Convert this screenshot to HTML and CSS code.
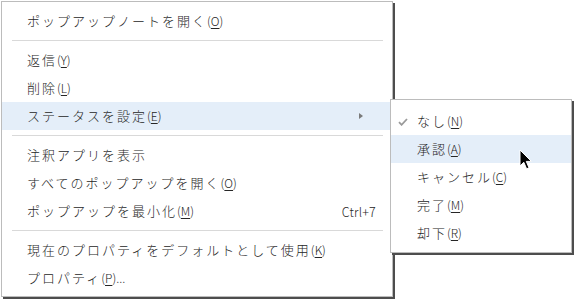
FILE: index.html
```html
<!DOCTYPE html>
<html lang="ja">
<head>
<meta charset="utf-8">
<link rel="stylesheet" href="styles.css">
</head>
<body>
<div class="screen">
  <div class="menu main">
    <div class="item"><span class="label">ポップアップノートを開く</span><span class="acc">(<u>O</u>)</span></div>
    <div class="sep"></div>
    <div class="item"><span class="label">返信</span><span class="acc">(<u>Y</u>)</span></div>
    <div class="item"><span class="label">削除</span><span class="acc">(<u>L</u>)</span></div>
    <div class="item active"><span class="label">ステータスを設定</span><span class="acc">(<u>E</u>)</span><span class="arrow"></span></div>
    <div class="sep"></div>
    <div class="item"><span class="label">注釈アプリを表示</span></div>
    <div class="item"><span class="label">すべてのポップアップを開く</span><span class="acc">(<u>O</u>)</span></div>
    <div class="item"><span class="label">ポップアップを最小化</span><span class="acc">(<u>M</u>)</span><span class="shortcut">Ctrl+7</span></div>
    <div class="sep"></div>
    <div class="item"><span class="label">現在のプロパティをデフォルトとして使用</span><span class="acc">(<u>K</u>)</span></div>
    <div class="item"><span class="label">プロパティ</span><span class="acc">(<u>P</u>)...</span></div>
  </div>

  <div class="menu sub">
    <div class="item checked"><svg class="check" width="10" height="8" viewBox="0 0 10 8"><path d="M1 4.2 L3.6 6.8 L9 1" fill="none" stroke="#9a9a9a" stroke-width="1.8"/></svg><span class="label">なし</span><span class="acc">(<u>N</u>)</span></div>
    <div class="item active"><span class="label">承認</span><span class="acc">(<u>A</u>)</span></div>
    <div class="item"><span class="label">キャンセル</span><span class="acc">(<u>C</u>)</span></div>
    <div class="item"><span class="label">完了</span><span class="acc">(<u>M</u>)</span></div>
    <div class="item"><span class="label">却下</span><span class="acc">(<u>R</u>)</span></div>
  </div>

  <svg class="cursor" width="14" height="22" viewBox="0 0 14 22"><path d="M1 1 L1 17 L4.8 13.3 L7.6 19.8 L10 18.8 L7.3 12.4 L12.4 12.4 Z" fill="#000" stroke="#fff" stroke-width="1" stroke-linejoin="miter"/></svg>
</div>
</body>
</html>
```

FILE: styles.css
```css
html, body {
  margin: 0;
  padding: 0;
  background: #ffffff;
}

.screen {
  position: relative;
  width: 575px;
  height: 300px;
  overflow: hidden;
  font-family: "Noto Sans CJK JP", "Noto Sans", sans-serif;
  font-weight: 300;
  color: #262626;
}

.menu {
  box-sizing: border-box;
  background: #ffffff;
  border: 1px solid #bcbcbc;
  box-shadow: 2px 2px 0 #4d4d4d;
}

.main {
  margin: 1px 0 0 1px;
  width: 392px;
  padding: 5px 0 4px;
}

.sub {
  position: absolute;
  left: 390px;
  top: 99px;
  width: 182px;
  padding: 7px 0 5px;
}

.item {
  display: flex;
  align-items: center;
  height: 28px;
  padding-left: 25px;
  padding-right: 16px;
  position: relative;
  white-space: nowrap;
}

.sub .item {
  padding-left: 26px;
}

.item.active {
  background: #e4eef9;
}

.label {
  font-size: 13px;
  letter-spacing: 2px;
  line-height: 28px;
}

.acc {
  font-size: 12px;
  line-height: 28px;
  letter-spacing: 0;
}

.acc u {
  text-decoration-thickness: 1px;
  text-underline-offset: 2px;
}

.shortcut {
  margin-left: auto;
  font-size: 12.5px;
  letter-spacing: 0.2px;
}

.arrow {
  position: absolute;
  left: 357px;
  top: 11px;
  width: 0;
  height: 0;
  border-top: 3.5px solid transparent;
  border-bottom: 3.5px solid transparent;
  border-left: 4px solid #7a7a7a;
}

.check {
  position: absolute;
  left: 7px;
  top: 11px;
}

.sep {
  height: 1px;
  background: #d9d9d9;
  margin: 5px 9px 5px 10px;
}

.cursor {
  position: absolute;
  left: 519px;
  top: 149px;
}
```
